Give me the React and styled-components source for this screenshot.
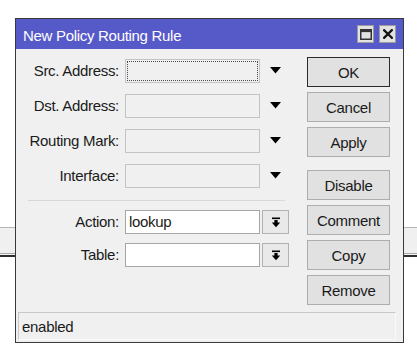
import React from "react";
import styled, { createGlobalStyle } from "styled-components";

const Global = createGlobalStyle`
  html, body { margin: 0; padding: 0; background: #ffffff; }
  body { font-family: "Liberation Sans", Arial, sans-serif; }
  * { box-sizing: border-box; }
`;

const Desktop = styled.div`
  width: 417px;
  height: 360px;
  overflow: hidden;
  padding: 18px 0 0 15px;
  background: linear-gradient(
    to bottom,
    #ffffff 0px, #ffffff 227px,
    #b4b4b4 227px, #b4b4b4 228px,
    #f0f0f0 228px, #f0f0f0 253px,
    #a8a8a8 253px, #a8a8a8 254px,
    #f4f4f4 254px, #f4f4f4 255px,
    #2e2e2e 255px, #2e2e2e 257px,
    #ffffff 257px
  );
`;

const Window = styled.div`
  width: 389px;
  height: 325px;
  border: 1px solid #3a3a3a;
  background: #f0f0f0;
  display: flex;
  flex-direction: column;
  font-size: 15px;
  letter-spacing: -0.3px;
  color: #1a1a1a;
`;

const TitleBar = styled.div`
  height: 30px;
  flex: none;
  background: #5659c8;
  color: #ffffff;
  display: flex;
  align-items: center;
  justify-content: space-between;
  padding: 3px 7px 0 7px;
`;

const TitleButtons = styled.div`
  display: flex;
  gap: 5px;
  margin-top: -3px;
`;

const TitleButton = styled.div`
  width: 17px;
  height: 18px;
  background: #e2e2e2;
  border: 1px solid #9c9c9c;
  display: flex;
  align-items: center;
  justify-content: center;
`;

const Body = styled.div`
  flex: 1;
  display: flex;
  align-items: flex-start;
`;

const Form = styled.div`
  width: 269px;
  padding-top: 10px;
`;

const FieldGrid = styled.div`
  display: grid;
  grid-template-columns: 103px 135px 23px;
  column-gap: 6px;
  row-gap: ${(p) => p.$gap}px;
  & > :nth-child(3n) { margin-left: -4px; }
  grid-auto-rows: 24px;
  align-items: center;
`;

const Label = styled.label`
  text-align: right;
  white-space: nowrap;
  line-height: 24px;
`;

const Field = styled.div`
  position: relative;
  height: 24px;
  border: 1px solid ${(p) => (p.$active ? "#a6a6a6" : "#c4c4c4")};
  background: ${(p) => (p.$active ? "#ffffff" : "#f0f0f0")};
  padding: 0 3px;
  line-height: 22px;
`;

const FocusRing = styled.div`
  position: absolute;
  inset: 1px;
  border: 1px dotted #4a4a4a;
`;

const Arrow = styled.div`
  height: 24px;
  display: flex;
  align-items: center;
  justify-content: center;
  padding-bottom: 2px;
`;

const DropButton = styled.div`
  height: 24px;
  border: 1px solid #b2b2b2;
  background: #e9e9e9;
  display: flex;
  align-items: center;
  justify-content: center;
`;

const Separator = styled.div`
  height: 1px;
  background: #d8d8d8;
  margin: 12px 0 9px 12px;
  width: 257px;
`;

const Buttons = styled.div`
  margin-left: 22px;
  padding-top: 8px;
  width: 83px;
  display: flex;
  flex-direction: column;
  gap: 5px;
`;

const Button = styled.div`
  height: 30px;
  border: 1px solid ${(p) => (p.$default ? "#2a2a2a" : "#adadad")};
  background: #e1e1e1;
  display: flex;
  align-items: center;
  justify-content: center;
  margin-top: ${(p) => p.$extra || 0}px;
`;

const StatusBar = styled.div`
  flex: none;
  height: 28px;
  margin: 0 7px 2px 2px;
  border-top: 1px solid #c8c8c8;
  border-left: 1px solid #c8c8c8;
  border-bottom: 1px solid #fafafa;
  border-right: 1px solid #fafafa;
  padding-left: 3px;
  display: flex;
  align-items: center;
`;

const Triangle = () => (
  <svg width="11" height="7" viewBox="0 0 11 7">
    <polygon points="0,0 11,0 5.5,6.5" fill="#000" />
  </svg>
);

const BarArrow = () => (
  <svg width="10" height="11" viewBox="0 0 10 11">
    <rect x="1" y="0.5" width="8" height="1.6" fill="#000" />
    <rect x="3.4" y="3" width="3.2" height="3" fill="#000" />
    <polygon points="0.8,5.6 9.2,5.6 5,10.2" fill="#000" />
  </svg>
);

const MaxIcon = () => (
  <svg width="12" height="11" viewBox="0 0 12 11">
    <rect x="0.75" y="0.75" width="10.5" height="9.5" fill="none" stroke="#333" strokeWidth="1.5" />
    <rect x="0.5" y="0.5" width="11" height="2.6" fill="#333" />
  </svg>
);

const CloseIcon = () => (
  <svg width="10" height="10" viewBox="0 0 10 10">
    <path d="M1.2 1.2 L8.8 8.8 M8.8 1.2 L1.2 8.8" stroke="#111" strokeWidth="2.3" strokeLinecap="square" />
  </svg>
);

const topFields = [
  { label: "Src. Address:", focus: true },
  { label: "Dst. Address:" },
  { label: "Routing Mark:" },
  { label: "Interface:" },
];

const bottomFields = [
  { label: "Action:", value: "lookup" },
  { label: "Table:", value: "" },
];

const buttons = [
  { text: "OK", def: true },
  { text: "Cancel" },
  { text: "Apply" },
  { text: "Disable", extra: 8 },
  { text: "Comment" },
  { text: "Copy" },
  { text: "Remove" },
];

export default function App() {
  return (
    <>
      <Global />
      <Desktop>
        <Window>
          <TitleBar>
            <span>New Policy Routing Rule</span>
            <TitleButtons>
              <TitleButton><MaxIcon /></TitleButton>
              <TitleButton><CloseIcon /></TitleButton>
            </TitleButtons>
          </TitleBar>
          <Body>
            <Form>
              <FieldGrid $gap={11}>
                {topFields.map((f) => (
                  <React.Fragment key={f.label}>
                    <Label>{f.label}</Label>
                    <Field>{f.focus && <FocusRing />}</Field>
                    <Arrow><Triangle /></Arrow>
                  </React.Fragment>
                ))}
              </FieldGrid>
              <Separator />
              <FieldGrid $gap={9}>
                {bottomFields.map((f) => (
                  <React.Fragment key={f.label}>
                    <Label>{f.label}</Label>
                    <Field $active>{f.value}</Field>
                    <DropButton><BarArrow /></DropButton>
                  </React.Fragment>
                ))}
              </FieldGrid>
            </Form>
            <Buttons>
              {buttons.map((b) => (
                <Button key={b.text} $default={b.def} $extra={b.extra}>{b.text}</Button>
              ))}
            </Buttons>
          </Body>
          <StatusBar>enabled</StatusBar>
        </Window>
      </Desktop>
    </>
  );
}
